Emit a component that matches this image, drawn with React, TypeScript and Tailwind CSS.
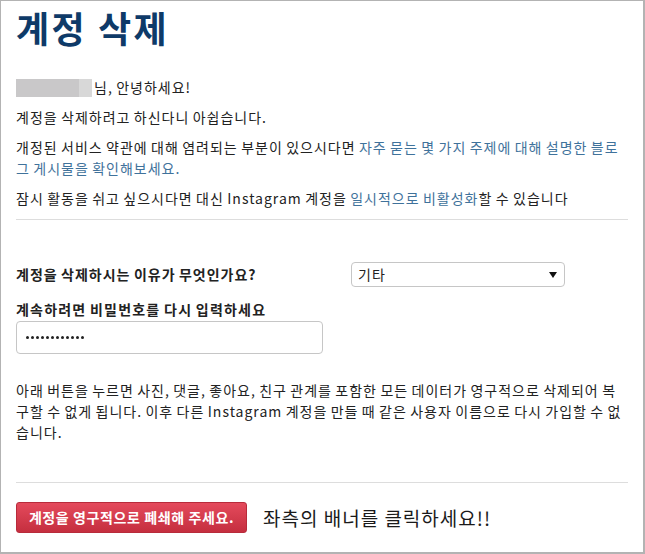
import React from "react";

const FONT = { fontFamily: '"Noto Sans CJK KR", "Noto Sans", sans-serif' };

export default function App() {
  return (
    <div className="w-[645px] h-[554px] bg-white" style={FONT}>
      <div className="w-[645px] h-[554px] border border-r-2 border-b-2 border-[#b3b3b3] pl-[15px] pr-[15px] pt-[8px] text-[14px] leading-[21px] text-[#222] tracking-[1px] [word-spacing:-0.75px] break-all">
        <h1 className="text-[36px] leading-[36px] font-bold text-[#0e3a68] tracking-[2.5px] [word-spacing:0px]">계정 삭제</h1>

        <p className="mt-[32px] mb-[9px] flex items-center">
          <span className="inline-flex h-[18px] mr-[2px]">
            <span className="w-[63px] h-[18px] bg-[#c9c8c9]" />
            <span className="w-[13px] h-[18px] bg-[#d8d8d8]" />
          </span>
          <span>님, 안녕하세요!</span>
        </p>
        <p className="mb-[9px]">계정을 삭제하려고 하신다니 아쉽습니다.</p>
        <p className="mb-[9px]">
          개정된 서비스 약관에 대해 염려되는 부분이 있으시다면{" "}
          <span className="text-[#3f729b]">자주 묻는 몇 가지 주제에 대해 설명한 블로그 게시물을 확인해보세요.</span>
        </p>
        <p className="mb-[10px]">
          잠시 활동을 쉬고 싶으시다면 대신 Instagram 계정을{" "}
          <span className="text-[#3f729b]">일시적으로 비활성화</span>할 수 있습니다
        </p>
        <div className="h-px bg-[#dddddd]" />

        <div className="mt-[42px] flex items-center h-[25px]">
          <div className="w-[335px] font-bold tracking-[1px]">계정을 삭제하시는 이유가 무엇인가요?</div>
          <div className="w-[214px] h-[25px] border border-[#c6c6c6] rounded-[4px] flex items-center justify-between pl-[6px] pr-[7px] bg-white">
            <span>기타</span>
            <svg width="8" height="6" viewBox="0 0 8 6">
              <path d="M0 0 H8 L4 6 Z" fill="#111" />
            </svg>
          </div>
        </div>

        <div className="mt-[12px] font-bold tracking-[1.2px]">계속하려면 비밀번호를 다시 입력하세요</div>
        <div className="mt-[1px] w-[307px] h-[33px] border border-[#c6c6c6] rounded-[4px] flex items-center pl-[9px] gap-[2px]">
          {Array.from({ length: 12 }).map((_, i) => (
            <span key={i} className="w-[3px] h-[3px] rounded-full bg-[#222]" />
          ))}
        </div>

        <p className="mt-[26px]">
          아래 버튼을 누르면 사진, 댓글, 좋아요, 친구 관계를 포함한 모든 데이터가 영구적으로 삭제되어 복구할 수 없게 됩니다. 이후 다른 Instagram 계정을 만들 때 같은 사용자 이름으로 다시 가입할 수 없습니다.
        </p>

        <div className="mt-[39px] h-px bg-[#dddddd]" />

        <div className="mt-[19px] flex items-center">
          <button className="w-[231px] h-[31px] rounded-[3px] border border-[#b82b3b] bg-gradient-to-b from-[#e44a5c] to-[#c52e3f] text-white font-bold text-[14px] tracking-[0.6px] [word-spacing:0px] leading-[29px] px-[4px] whitespace-nowrap" style={FONT}>
            계정을 영구적으로 폐쇄해 주세요.
          </button>
          <span className="ml-[16px] text-[19px] tracking-[1px] [word-spacing:0px] text-[#1a1a1a]">좌측의 배너를 클릭하세요!!</span>
        </div>
      </div>
    </div>
  );
}
